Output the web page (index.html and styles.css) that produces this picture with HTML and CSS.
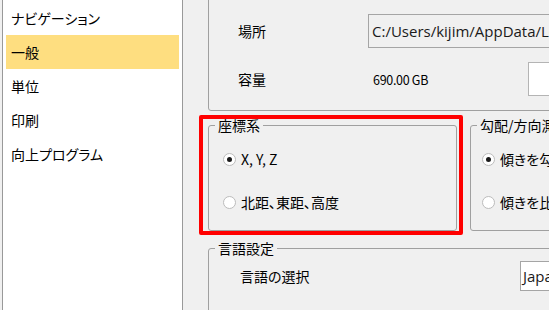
FILE: index.html
```html
<!DOCTYPE html>
<html lang="ja">
<head>
  <meta charset="UTF-8" />
  <title>オプション</title>
  <link rel="stylesheet" href="styles.css">
</head>
<body>
  <div class="window">
    <nav class="sidebar">
      <div class="nav-item">ナビゲーション</div>
      <div class="nav-item active">一般</div>
      <div class="nav-item">単位</div>
      <div class="nav-item">印刷</div>
      <div class="nav-item">向上プログラム</div>
    </nav>
    <main class="content">
      <div class="group storage">
        <div class="field-row">
          <span class="field-label">場所</span>
          <div class="path-box">C:/Users/kijim/AppData/Local/Temp</div>
        </div>
        <div class="field-row">
          <span class="field-label">容量</span>
          <span class="field-value">690.00 GB</span>
          <div class="spin-box"></div>
        </div>
      </div>

      <div class="group-row">
        <fieldset class="group coords">
          <legend>座標系</legend>
          <label class="radio-row"><span class="radio checked"></span>X, Y, Z</label>
          <label class="radio-row"><span class="radio"></span>北距、東距、高度</label>
        </fieldset>
        <fieldset class="group slope">
          <legend>勾配/方向測定</legend>
          <label class="radio-row"><span class="radio checked"></span>傾きを勾配で表示</label>
          <label class="radio-row"><span class="radio"></span>傾きを比率で表示</label>
        </fieldset>
        <div class="highlight-frame"></div>
      </div>

      <fieldset class="group language">
        <legend>言語設定</legend>
        <div class="field-row">
          <span class="field-label lang-label">言語の選択</span>
          <div class="combo">Japanese</div>
        </div>
      </fieldset>
    </main>
  </div>
</body>
</html>
```

FILE: styles.css
```css
* { box-sizing: border-box; }
body {
  margin: 0;
  font-family: "Noto Sans CJK JP", sans-serif;
  font-feature-settings: "palt";
  font-size: 14px;
  color: #000;
  background: #f0f0f0;
}
.window {
  display: flex;
  width: 549px;
  height: 310px;
  overflow: hidden;
}

/* left navigation */
.sidebar {
  flex: 0 0 181px;
  margin-left: 2px;
  padding-top: 1px;
  background: #fff;
  border-left: 1px solid #999;
  border-right: 1px solid #999;
}
.nav-item {
  height: 34px;
  margin: 0 3px;
  padding-left: 5px;
  line-height: 34px;
  white-space: nowrap;
}
.nav-item.active { background: #fede80; }

/* right content */
.content {
  flex: 1;
  min-width: 0;
  overflow: hidden;
  padding-left: 25px;
  background: #f0f0f0;
}
.group {
  border: 1px solid #a0a0a0;
  border-radius: 3px;
  margin: 0;
}
.group legend {
  padding: 0 3px;
  line-height: 16px;
  white-space: nowrap;
}
.storage {
  width: 420px;
  height: 131px;
  margin-top: -20px;
  padding: 33px 0 0 29px;
  display: flex;
  flex-direction: column;
  gap: 14px;
}
.field-row {
  display: flex;
  align-items: center;
  height: 34px;
  flex-shrink: 0;
}
.field-label {
  flex: 0 0 130px;
}
.path-box {
  flex: 0 0 260px;
  height: 34px;
  padding-left: 3px;
  line-height: 32px;
  border: 1px solid #a5a5a5;
  font-family: "Open Sans", sans-serif;
  font-size: 15px;
  color: #1a1a1a;
  white-space: nowrap;
  overflow: hidden;
}
.field-value {
  flex: 0 0 160px;
  padding-left: 5px;
  font-size: 12.5px;
  letter-spacing: -0.3px;
}
.spin-box {
  flex: 0 0 80px;
  height: 34px;
  background: #fff;
  border: 1px solid #b4b4b4;
}

.group-row {
  position: relative;
  display: flex;
  gap: 13px;
  margin-top: 6px;
  width: 420px;
}
.coords {
  flex: 0 0 249px;
  height: 114px;
  padding: 16px 0 0 14px;
}
.slope {
  flex: 0 0 150px;
  height: 114px;
  padding: 16px 0 0 11px;
}
.coords legend { margin-left: -8px; }
.slope legend { margin-left: -5px; }
.radio-row {
  display: flex;
  align-items: center;
  gap: 5px;
  height: 20px;
  margin-bottom: 23px;
  white-space: nowrap;
}
.radio {
  flex: 0 0 13px;
  height: 13px;
  border: 1px solid #bcbcbc;
  border-radius: 50%;
  background: #fff;
  display: flex;
  align-items: center;
  justify-content: center;
}
.radio.checked::after {
  content: "";
  width: 5px;
  height: 5px;
  border-radius: 50%;
  background: #1a1a1a;
}
.highlight-frame {
  position: absolute;
  left: -9px;
  top: -2px;
  width: 264px;
  height: 120px;
  border: 4px solid #ff0000;
  border-radius: 2px;
}

.language {
  width: 420px;
  height: 120px;
  margin-top: 9px;
  padding: 3px 0 0 31px;
}
.language legend { margin-left: -25px; }
.lang-label { flex: 0 0 280px; }
.combo {
  flex: 0 0 120px;
  height: 30px;
  padding-left: 2px;
  line-height: 28px;
  background: #fff;
  border: 1px solid #a5a5a5;
  font-family: "Open Sans", sans-serif;
  font-size: 15px;
  color: #1a1a1a;
}
```
